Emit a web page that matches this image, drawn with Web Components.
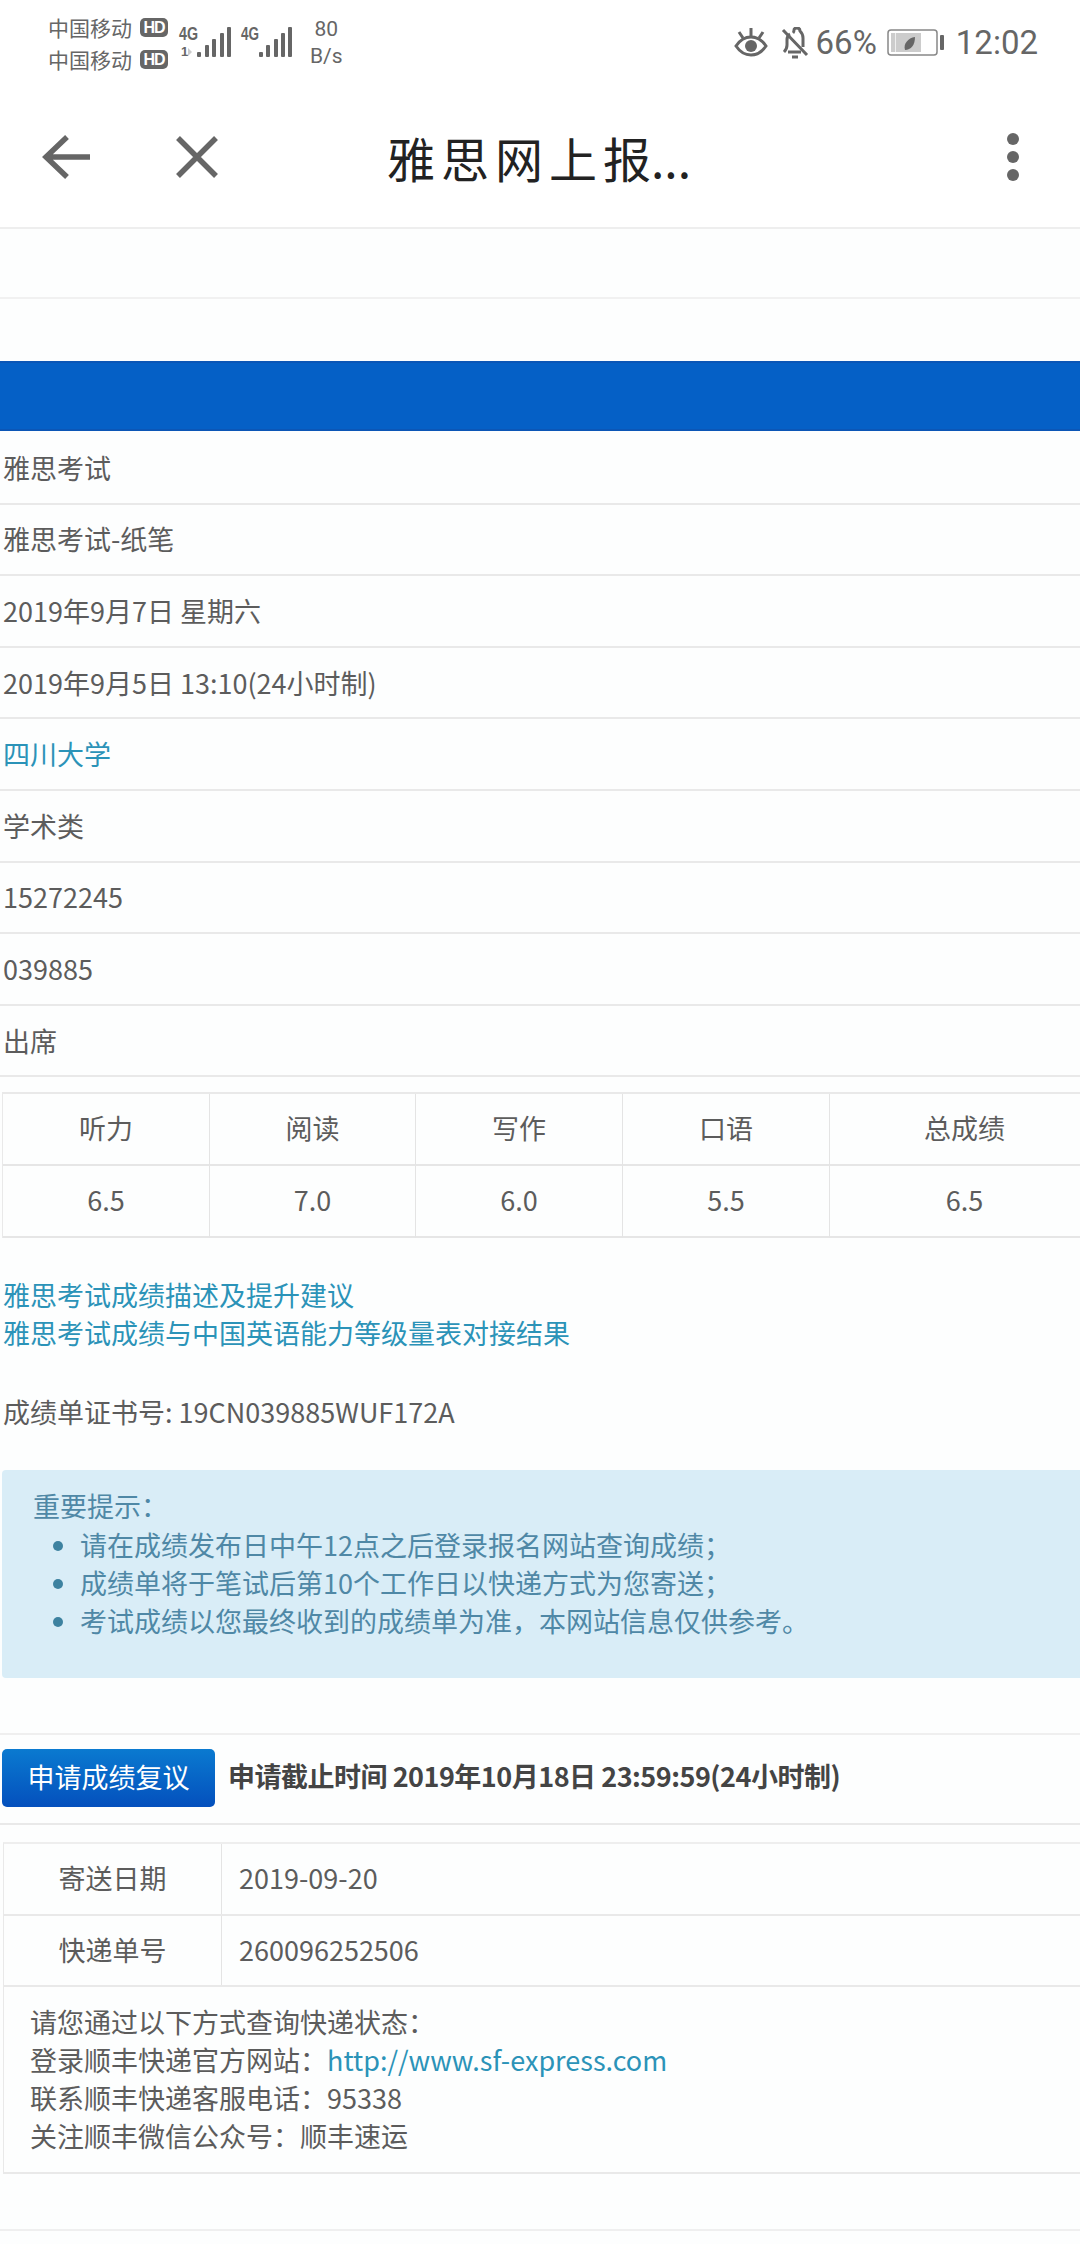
<!DOCTYPE html>
<html lang="zh-CN">
<head>
<meta charset="utf-8">
<title>雅思网上报名</title>
<style>
  html, body { margin: 0; background: #fdfefe; }
  body {
    width: 1080px;
    height: 2244px;
    overflow: hidden;
    font-family: "Noto Sans CJK SC", "Noto Sans", sans-serif;
    font-size: 27px;
    color: #5c5c5c;
  }
</style>
</head>
<body>
<status-bar></status-bar>
<app-bar title="雅思网上报..."></app-bar>
<blank-row></blank-row>
<blue-band></blue-band>
<info-row>雅思考试</info-row>
<info-row>雅思考试-纸笔</info-row>
<info-row>2019年9月7日 星期六</info-row>
<info-row>2019年9月5日 13:10(24小时制)</info-row>
<info-row link>四川大学</info-row>
<info-row>学术类</info-row>
<info-row>15272245</info-row>
<info-row>039885</info-row>
<info-row>出席</info-row>
<score-table></score-table>
<link-list></link-list>
<cert-line>成绩单证书号: 19CN039885WUF172A</cert-line>
<alert-box></alert-box>
<review-bar></review-bar>
<delivery-card></delivery-card>
<page-end></page-end>

<script>
class StatusBar extends HTMLElement {
  constructor() {
    super();
    let shadowDom = this.attachShadow({ mode: "open" });
    shadowDom.innerHTML = `
      <style>
      :host { display: flex; height: 70px; box-sizing: border-box; padding: 11px 42px 0 48px; justify-content: space-between; color: #666; background: #fff; }
      .left { display: flex; gap: 9px; }
      .carriers { display: flex; flex-direction: column; font-size: 21px; line-height: 32px; }
      .carrier { display: flex; align-items: center; gap: 8px; }
      .hd { width: 28px; height: 19px; border-radius: 5px; background: #666; color: #fff; font: bold 16px/19px "Liberation Sans", sans-serif; text-align: center; letter-spacing: -1px; }
      .signal { margin-top: 9px; }
      .speed { margin-left: 4px; font: 21px/27px "Roboto", sans-serif; text-align: center; padding-top: 5px; }
      .right { display: flex; align-items: center; height: 64px; font: 33px/40px "Roboto", sans-serif; }
      .bell { margin-left: 12px; }
      .pct { margin-left: 7px; }
      .batt { margin-left: 10px; }
      .time { margin-left: 11px; }
      </style>
      <div class="left">
        <div class="carriers">
          <div class="carrier">中国移动<span class="hd">HD</span></div>
          <div class="carrier">中国移动<span class="hd">HD</span></div>
        </div>
        <svg class="signal" width="120" height="44" viewBox="0 0 120 44" fill="#666">
          <text x="2" y="20" font-family="Liberation Sans" font-size="18" font-weight="700" textLength="19" lengthAdjust="spacingAndGlyphs">4G</text>
          <text x="4" y="36" font-family="Liberation Sans" font-size="13" font-weight="700">1</text>
          <path d="M11 28l4 4-4 4z" fill="#ccc"/>
          <rect x="20" y="32" width="4" height="5" rx="1"/><rect x="28" y="25" width="4" height="12" rx="1"/><rect x="35" y="19" width="4" height="18" rx="1"/><rect x="43" y="13" width="4" height="24" rx="1"/><rect x="50" y="7" width="4" height="30" rx="1"/>
          <text x="64" y="20" font-family="Liberation Sans" font-size="18" font-weight="700" textLength="18" lengthAdjust="spacingAndGlyphs">4G</text>
          <rect x="82" y="32" width="4" height="5" rx="1"/><rect x="89" y="25" width="4" height="12" rx="1"/><rect x="97" y="19" width="4" height="18" rx="1"/><rect x="104" y="13" width="4" height="24" rx="1"/><rect x="111" y="7" width="4" height="30" rx="1"/>
        </svg>
        <div class="speed">80<br>B/s</div>
      </div>
      <div class="right">
        <svg width="36" height="32" viewBox="0 0 36 32" fill="none" stroke="#666" stroke-width="3">
          <path d="M3 19c4-6 9-9 15-9s11 3 15 9c-4 6-9 9-15 9S7 25 3 19z"/>
          <circle cx="18" cy="19" r="6" fill="#666" stroke="none"/>
          <path d="M18 9V1M10 11 6 5M26 11l4-6"/>
        </svg>
        <svg class="bell" width="28" height="32" viewBox="0 0 28 32" fill="none" stroke="#666" stroke-width="3">
          <path d="M3 25c2-2 3-4 3-7v-5c0-3 1-5 3-6M12 6c1-1 1-2 1-3s1-2 3-2 3 1 3 3c2 2 3 4 3 7v9M7 25h13"/>
          <path d="M11 30h6M2 3l24 25"/>
        </svg>
        <span class="pct">66%</span>
        <svg class="batt" width="58" height="28" viewBox="0 0 58 28">
          <rect x="1" y="1" width="49" height="25" rx="3" fill="#fff" stroke="#888" stroke-width="1.5"/>
          <rect x="4" y="4" width="30" height="19" fill="#ccc"/>
          <rect x="8" y="4" width="1" height="19" fill="#eee"/>
          <path d="M18 21c-2-6 3-12 10-13 0 8-4 13-10 13z" fill="#666"/>
          <rect x="53" y="6" width="4" height="15" rx="1" fill="#666"/>
        </svg>
        <span class="time">12:02</span>
      </div>
    `;
  }
}

class AppBar extends HTMLElement {
  constructor() {
    super();
    let title = this.getAttribute("title");
    let shadowDom = this.attachShadow({ mode: "open" });
    shadowDom.innerHTML = `
      <style>
      :host { display: flex; height: 159px; box-sizing: border-box; align-items: center; padding: 16px 60px 0 42px; background: #fff; border-bottom: 2px solid #eeeeee; }
      .close { margin-left: 83px; }
      .title { flex: 1; margin-left: 168px; font-size: 48px; color: #222; white-space: nowrap; }
      .title span { letter-spacing: 6px; }
      </style>
      <svg width="50" height="46" viewBox="0 0 50 46" fill="none" stroke="#666" stroke-width="5.5" stroke-linejoin="miter"><path d="M48 23H6M25 3 4 23l21 20"/></svg>
      <svg class="close" width="44" height="44" viewBox="0 0 44 44" fill="none" stroke="#666" stroke-width="5.5"><path d="M3 3l38 38M41 3 3 41"/></svg>
      <div class="title"><span>${title.slice(0, 4)}</span>${title.slice(4)}</div>
      <svg width="14" height="50" viewBox="0 0 14 50" fill="#666"><circle cx="7" cy="7" r="6"/><circle cx="7" cy="25" r="6"/><circle cx="7" cy="43" r="6"/></svg>
    `;
  }
}

class BlankRow extends HTMLElement {
  constructor() {
    super();
    this.attachShadow({ mode: "open" }).innerHTML = `
      <style>:host { display: block; height: 70px; box-sizing: border-box; border-bottom: 2px solid #f1f1f1; }</style>
    `;
  }
}

class BlueBand extends HTMLElement {
  constructor() {
    super();
    this.attachShadow({ mode: "open" }).innerHTML = `
      <style>:host { display: block; margin: 62px 0 2px; height: 70px; box-sizing: border-box; background: #0560c6; border-top: 2px solid #0b56b6; border-bottom: 2px solid #0b56b6; }</style>
    `;
  }
}

class InfoRow extends HTMLElement {
  constructor() {
    super();
    this.attachShadow({ mode: "open" }).innerHTML = `
      <style>
      :host { display: flex; align-items: center; height: 71.6px; box-sizing: border-box; padding: 0 3px 1px; border-bottom: 2px solid #e9e9e9; }
      :host([link]) { color: #2b93b8; }
      </style>
      <slot></slot>
    `;
  }
}

class ScoreTable extends HTMLElement {
  constructor() {
    super();
    let shadowDom = this.attachShadow({ mode: "open" });
    shadowDom.innerHTML = `
      <style>
      :host { display: grid; grid-template-columns: 207px 206px 207px 207px 251px; grid-auto-rows: 72px; margin: 15px 0 38px 2px; border-top: 2px solid #e9e9e9; border-left: 1px solid #e9e9e9; box-sizing: border-box; }
      div { display: flex; align-items: center; justify-content: center; padding-bottom: 3px; box-sizing: border-box; border-right: 1px solid #e4e4e4; border-bottom: 2px solid #e6e6e6; }
      .last { border-right: 0; padding-left: 18px; }
      </style>
      <div>听力</div><div>阅读</div><div>写作</div><div>口语</div><div class="last">总成绩</div>
      <div>6.5</div><div>7.0</div><div>6.0</div><div>5.5</div><div class="last">6.5</div>
    `;
  }
}

class LinkList extends HTMLElement {
  constructor() {
    super();
    this.attachShadow({ mode: "open" }).innerHTML = `
      <style>
      :host { display: block; padding-left: 3px; line-height: 38px; color: #2b93b8; }
      div { height: 38px; }
      </style>
      <div>雅思考试成绩描述及提升建议</div>
      <div>雅思考试成绩与中国英语能力等级量表对接结果</div>
    `;
  }
}

class CertLine extends HTMLElement {
  constructor() {
    super();
    this.attachShadow({ mode: "open" }).innerHTML = `
      <style>:host { display: block; margin: 41px 0 39px; padding-left: 3px; height: 38px; line-height: 38px; }</style>
      <slot></slot>
    `;
  }
}

class AlertBox extends HTMLElement {
  constructor() {
    super();
    let shadowDom = this.attachShadow({ mode: "open" });
    shadowDom.innerHTML = `
      <style>
      :host { display: block; height: 208px; box-sizing: border-box; margin-left: 2px; padding: 17px 0 0 31px; line-height: 38px; background: #d9edf7; color: #4f88a6; border-radius: 4px 0 0 4px; }
      ul { margin: 1px 0 0; padding: 0 0 0 47px; }
      li { height: 38px; }
      li::marker { color: #3d82a0; }
      </style>
      <div>重要提示&#xFF1A;</div>
      <ul>
        <li>请在成绩发布日中午12点之后登录报名网站查询成绩&#xFF1B;</li>
        <li>成绩单将于笔试后第10个工作日以快递方式为您寄送&#xFF1B;</li>
        <li>考试成绩以您最终收到的成绩单为准&#xFF0C;本网站信息仅供参考。</li>
      </ul>
    `;
  }
}

class ReviewBar extends HTMLElement {
  constructor() {
    super();
    let shadowDom = this.attachShadow({ mode: "open" });
    shadowDom.innerHTML = `
      <style>
      :host { display: flex; align-items: center; gap: 13px; height: 92px; box-sizing: border-box; margin-top: 55px; padding: 0 0 2px 2px; border-top: 2px solid #efefef; border-bottom: 2px solid #e9e9e9; }
      button { width: 213px; height: 58px; padding: 0 0 3px; border: 0; border-radius: 5px; background: linear-gradient(#0a7ad0, #0450bd); color: #fff; font: inherit; }
      b { margin-bottom: 5px; color: #444; letter-spacing: -0.5px; white-space: nowrap; }
      </style>
      <button type="button">申请成绩复议</button>
      <b>申请截止时间 2019年10月18日 23:59:59(24小时制)</b>
    `;
  }
}

class DeliveryCard extends HTMLElement {
  constructor() {
    super();
    let shadowDom = this.attachShadow({ mode: "open" });
    shadowDom.innerHTML = `
      <style>
      :host { display: block; margin: 17px 0 0 3px; border-top: 2px solid #eeeeee; border-left: 1px solid #e9e9e9; border-bottom: 2px solid #e9e9e9; }
      .row { display: grid; grid-template-columns: 218px 1fr; height: 71.5px; box-sizing: border-box; border-bottom: 2px solid #e9e9e9; }
      .row div { display: flex; align-items: center; padding-bottom: 3px; }
      .label { justify-content: center; border-right: 1px solid #e4e4e4; }
      .value { padding-left: 17px; }
      .note { padding: 16px 0 17px 26px; line-height: 38px; }
      a { color: #2b93b8; text-decoration: none; }
      </style>
      <div class="row"><div class="label">寄送日期</div><div class="value">2019-09-20</div></div>
      <div class="row"><div class="label">快递单号</div><div class="value">260096252506</div></div>
      <div class="note">
        请您通过以下方式查询快递状态&#xFF1A;<br>
        登录顺丰快递官方网站&#xFF1A;<a href="#">http://www.sf-express.com</a><br>
        联系顺丰快递客服电话&#xFF1A;95338<br>
        关注顺丰微信公众号&#xFF1A;顺丰速运
      </div>
    `;
  }
}

class PageEnd extends HTMLElement {
  constructor() {
    super();
    this.attachShadow({ mode: "open" }).innerHTML = `
      <style>:host { display: block; margin-top: 55px; border-top: 2px solid #efefef; }</style>
    `;
  }
}

customElements.define("status-bar", StatusBar);
customElements.define("app-bar", AppBar);
customElements.define("blank-row", BlankRow);
customElements.define("blue-band", BlueBand);
customElements.define("info-row", InfoRow);
customElements.define("score-table", ScoreTable);
customElements.define("link-list", LinkList);
customElements.define("cert-line", CertLine);
customElements.define("alert-box", AlertBox);
customElements.define("review-bar", ReviewBar);
customElements.define("delivery-card", DeliveryCard);
customElements.define("page-end", PageEnd);
</script>
</body>
</html>
